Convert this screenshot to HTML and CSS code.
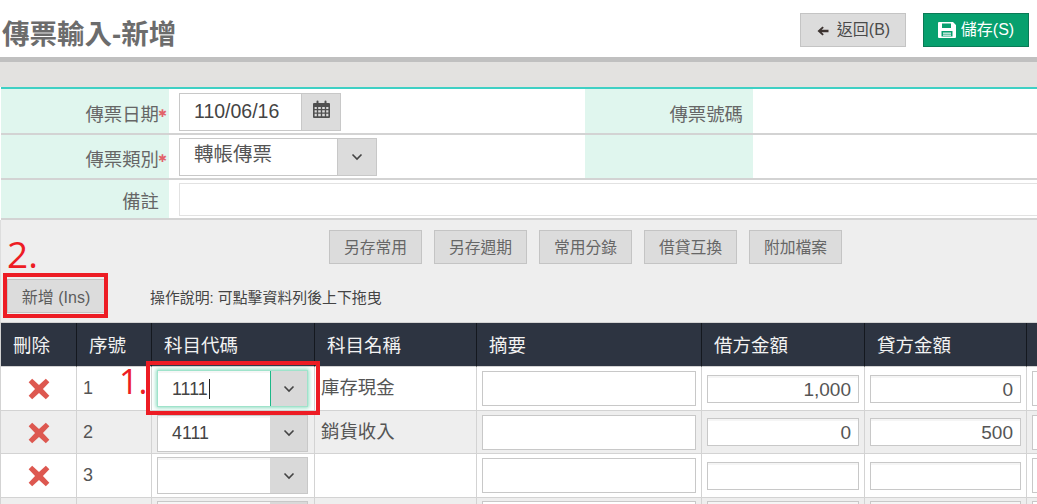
FILE: index.html
```html
<!DOCTYPE html>
<html lang="zh-Hant">
<head>
<meta charset="utf-8">
<title>傳票輸入-新增</title>
<link rel="stylesheet" href="styles.css">
</head>
<body>
<div class="page">
  <header class="page-head">
    <h1 class="page-title">傳票輸入-新增</h1>
    <div class="head-actions">
      <button class="btn btn-back" type="button">
        <svg class="icon-back" viewBox="0 0 12 10"><path d="M5.5 0.5 L0.5 5 L5.5 9.5 L6.8 8.2 L4.6 6.2 H11.5 V3.8 H4.6 L6.8 1.8 Z"/></svg>
        返回(B)
      </button>
      <button class="btn btn-save" type="button">
        <svg class="icon-save" viewBox="0 0 18 16"><path fill-rule="evenodd" d="M0 1 Q0 0 1 0 H15 L18 3 V15 Q18 16 17 16 H1 Q0 16 0 15 Z M4 1.5 V6 H13 V1.5 Z M3.5 9 V14.5 H14.5 V9 Z"/><rect x="5" y="10.6" width="8" height="1.1"/><rect x="5" y="12.6" width="8" height="1.1"/></svg>
        儲存(S)
      </button>
    </div>
  </header>
  <div class="band"></div>

  <section class="form">
    <div class="form-row row-one">
      <div class="label">傳票日期<span class="req">✱</span></div>
      <div class="value">
        <div class="date-field">
          <span class="date-text">110/06/16</span>
          <span class="addon">
            <svg class="icon-cal" viewBox="0 0 17 18"><path fill-rule="evenodd" d="M1 3 H3.5 V1.5 Q3.5 0.5 4.5 0.5 Q5.5 0.5 5.5 1.5 V3 H11.5 V1.5 Q11.5 0.5 12.5 0.5 Q13.5 0.5 13.5 1.5 V3 H16 Q17 3 17 4 V17 Q17 18 16 18 H1 Q0 18 0 17 V4 Q0 3 1 3 Z M1.6 7 V9 H3.8 V7 Z M5.2 7 V9 H7.8 V7 Z M9.2 7 V9 H11.8 V7 Z M13.2 7 V9 H15.4 V7 Z M1.6 10.3 V12.4 H3.8 V10.3 Z M5.2 10.3 V12.4 H7.8 V10.3 Z M9.2 10.3 V12.4 H11.8 V10.3 Z M13.2 10.3 V12.4 H15.4 V10.3 Z M1.6 13.7 V16.3 H3.8 V13.7 Z M5.2 13.7 V16.3 H7.8 V13.7 Z M9.2 13.7 V16.3 H11.8 V13.7 Z M13.2 13.7 V16.3 H15.4 V13.7 Z"/></svg>
          </span>
        </div>
      </div>
      <div class="label">傳票號碼</div>
      <div class="value"></div>
    </div>
    <div class="form-row row-two">
      <div class="label">傳票類別<span class="req">✱</span></div>
      <div class="value">
        <div class="type-select">
          <span class="type-text">轉帳傳票</span>
          <span class="addon addon-select">
            <svg class="chev" viewBox="0 0 12 8"><path d="M1.5 1.5 L6 6 L10.5 1.5"/></svg>
          </span>
        </div>
      </div>
      <div class="label"></div>
      <div class="value"></div>
    </div>
    <div class="form-row row-three">
      <div class="label">備註</div>
      <div class="value value-wide"><div class="note-input"></div></div>
    </div>
  </section>

  <section class="toolbar">
    <div class="tool-row">
      <button class="btn btn-tool" type="button">另存常用</button>
      <button class="btn btn-tool" type="button">另存週期</button>
      <button class="btn btn-tool" type="button">常用分錄</button>
      <button class="btn btn-tool" type="button">借貸互換</button>
      <button class="btn btn-tool" type="button">附加檔案</button>
    </div>
    <div class="add-row">
      <button class="btn btn-add" type="button">新增 (Ins)</button>
      <span class="hint">操作說明: 可點擊資料列後上下拖曳</span>
    </div>
  </section>

  <div class="table-wrap">
    <table class="grid">
      <colgroup>
        <col class="c-del"><col class="c-seq"><col class="c-code"><col class="c-name"><col class="c-memo"><col class="c-amt"><col class="c-amt2"><col class="c-more">
      </colgroup>
      <thead>
        <tr><th>刪除</th><th>序號</th><th>科目代碼</th><th>科目名稱</th><th>摘要</th><th>借方金額</th><th>貸方金額</th><th></th></tr>
      </thead>
      <tbody>
        <tr class="r1">
          <td class="del"><svg class="x" viewBox="0 0 20 20"><path d="M3.8 0.6 L10 6.4 L16.2 0.6 L19.4 3.8 L13.6 10 L19.4 16.2 L16.2 19.4 L10 13.6 L3.8 19.4 L0.6 16.2 L6.4 10 L0.6 3.8 Z"/></svg></td>
          <td class="seq">1</td>
          <td class="code"><div class="combo combo-focus"><span class="combo-text">1111<i class="caret"></i></span><span class="combo-btn"><svg class="chev" viewBox="0 0 12 8"><path d="M1.5 1.5 L6 6 L10.5 1.5"/></svg></span></div></td>
          <td class="name">庫存現金</td>
          <td class="memo"><div class="box"></div></td>
          <td class="amt"><div class="box-amt">1,000</div></td>
          <td class="amt"><div class="box-amt">0</div></td>
          <td class="more"><div class="box"></div></td>
        </tr>
        <tr class="r2 alt">
          <td class="del"><svg class="x" viewBox="0 0 20 20"><path d="M3.8 0.6 L10 6.4 L16.2 0.6 L19.4 3.8 L13.6 10 L19.4 16.2 L16.2 19.4 L10 13.6 L3.8 19.4 L0.6 16.2 L6.4 10 L0.6 3.8 Z"/></svg></td>
          <td class="seq">2</td>
          <td class="code"><div class="combo"><span class="combo-text">4111</span><span class="combo-btn"><svg class="chev" viewBox="0 0 12 8"><path d="M1.5 1.5 L6 6 L10.5 1.5"/></svg></span></div></td>
          <td class="name">銷貨收入</td>
          <td class="memo"><div class="box"></div></td>
          <td class="amt"><div class="box-amt">0</div></td>
          <td class="amt"><div class="box-amt">500</div></td>
          <td class="more"><div class="box"></div></td>
        </tr>
        <tr class="r3">
          <td class="del"><svg class="x" viewBox="0 0 20 20"><path d="M3.8 0.6 L10 6.4 L16.2 0.6 L19.4 3.8 L13.6 10 L19.4 16.2 L16.2 19.4 L10 13.6 L3.8 19.4 L0.6 16.2 L6.4 10 L0.6 3.8 Z"/></svg></td>
          <td class="seq">3</td>
          <td class="code"><div class="combo"><span class="combo-text"></span><span class="combo-btn"><svg class="chev" viewBox="0 0 12 8"><path d="M1.5 1.5 L6 6 L10.5 1.5"/></svg></span></div></td>
          <td class="name"></td>
          <td class="memo"><div class="box"></div></td>
          <td class="amt"><div class="box-amt"></div></td>
          <td class="amt"><div class="box-amt"></div></td>
          <td class="more"><div class="box"></div></td>
        </tr>
        <tr class="r4 alt">
          <td class="del"></td>
          <td class="seq"></td>
          <td class="code"><div class="combo"><span class="combo-text"></span><span class="combo-btn"></span></div></td>
          <td class="name"></td>
          <td class="memo"><div class="box"></div></td>
          <td class="amt"><div class="box-amt"></div></td>
          <td class="amt"><div class="box-amt"></div></td>
          <td class="more"><div class="box"></div></td>
        </tr>
      </tbody>
    </table>
  </div>

  <div class="mark mark-box-add"></div>
  <div class="mark mark-box-code"></div>
  <div class="mark-num mark-num-2">2.</div>
  <div class="mark-num mark-num-1">1.</div>
</div>
</body>
</html>
```

FILE: styles.css
```css
* { box-sizing: border-box; }
html, body { margin: 0; padding: 0; background: #fff; }
body {
  font-family: "Liberation Sans", "Noto Sans CJK TC", sans-serif;
  color: #555;
  overflow: hidden;
}
.page { position: relative; width: 1037px; height: 504px; overflow: hidden; }

.page-head {
  height: 57px;
  display: flex;
  justify-content: space-between;
  align-items: flex-start;
  padding-right: 8px;
}
.page-title {
  margin: 18px 0 0 2px;
  font-size: 27.5px;
  line-height: 34px;
  font-weight: 700;
  color: #6c6c6c;
}
.head-actions { display: flex; gap: 17px; padding-top: 13px; }

.btn {
  font-family: inherit;
  border: 1px solid #c4c4c4;
  background: #dcdcdc;
  color: #555;
  font-size: 15px;
  height: 34px;
  padding: 0;
  display: flex;
  align-items: center;
  justify-content: center;
}
.btn-back { width: 106px; gap: 8px; color: #4a4a4a; font-size: 16px; padding: 0 0 5px 1px; }
.btn-save { width: 106px; gap: 5px; background: #07a06e; border-color: #0a7a56; color: #fff; font-size: 16px; padding-bottom: 5px; }
.icon-back { width: 12px; height: 10px; fill: #3c3330; margin-top: 7px; }
.icon-save { width: 18px; height: 16px; fill: #fff; margin-top: 5px; }

.band {
  height: 30px;
  background: #e3e2e0;
  border-top: 5px solid #c0c0c0;
}

.form { border-top: 2px solid #3fd0c4; margin-left: 1px; }
.form-row {
  display: grid;
  grid-template-columns: 168px 416px 168px 1fr;
  grid-template-rows: minmax(0, 1fr);
  border-bottom: 2px solid #d3d3d3;
}
.row-one { height: 46px; }
.row-two { height: 45px; }
.row-three { height: 40px; }
.label {
  background: #e0f6ee;
  display: flex;
  align-items: center;
  justify-content: flex-end;
  padding: 4px 10px 0 0;
  font-size: 18.4px;
  color: #666;
  position: relative;
}
.row-two .label { padding-top: 3px; }
.row-three .label { padding-top: 2px; }
.req {
  position: absolute;
  right: 2px;
  top: 12px;
  font-family: "DejaVu Sans", sans-serif;
  font-size: 10.5px;
  font-weight: 700;
  line-height: 24px;
  color: #e2626a;
}
.row-two .req { top: 11px; }
.value { padding-left: 10px; }
.value-wide { grid-column: 2 / 5; }

.date-field {
  margin-top: 4px;
  width: 162px;
  height: 38px;
  display: flex;
  border: 1px solid #c8c8c8;
}
.date-text {
  flex: 1;
  padding-left: 14px;
  font-size: 19.5px;
  line-height: 35px;
  color: #444;
}
.addon {
  width: 39px;
  background: #dcdcdc;
  border-left: 1px solid #c8c8c8;
  display: flex;
  align-items: flex-start;
  justify-content: center;
}
.icon-cal { width: 17px; height: 18px; fill: #505050; margin-top: 6px; }

.type-select {
  margin-top: 3px;
  width: 198px;
  height: 38px;
  display: flex;
  border: 1px solid #c8c8c8;
}
.type-text {
  flex: 1;
  padding-left: 14px;
  font-size: 19.5px;
  line-height: 30px;
  color: #555;
}
.addon-select { align-items: center; }
.chev { width: 12px; height: 8px; fill: none; stroke: #444; stroke-width: 1.6; }

.note-input {
  margin-top: 3px;
  height: 33px;
  border: 1px solid #e2e2e2;
  border-right: 0;
}

.toolbar { background: #eee; height: 102px; border-left: 1px solid #ddd; }
.tool-row { display: flex; gap: 12px; padding: 10px 0 0 328px; }
.btn-tool { width: 93px; font-size: 15.8px; color: #666; padding-bottom: 2px; }
.add-row { display: flex; align-items: center; gap: 45px; margin-top: 15px; padding-left: 6px; }
.btn-add { width: 98px; font-size: 16px; color: #5c5c5c; }
.hint { font-size: 14.9px; color: #444; }

.table-wrap { border-top: 1px solid #d3d3d3; overflow: hidden; }
.grid {
  table-layout: fixed;
  border-collapse: separate;
  border-spacing: 0;
  width: 1127px;
}
.c-del { width: 77px; }
.c-seq { width: 75px; }
.c-code { width: 163px; }
.c-name { width: 162px; }
.c-memo { width: 225px; }
.c-amt { width: 163px; }
.c-amt2 { width: 162px; }
.c-more { width: 100px; }

.grid th {
  height: 44px;
  background: #2d3441;
  color: #f2f2f2;
  font-weight: 400;
  font-size: 18.5px;
  text-align: left;
  padding: 0 0 2px 12px;
  border-right: 1px solid #14181f;
  border-bottom: 1px solid #d3d3d3;
}
.grid th:first-child { border-left: 1px solid #d3d3d3; }
.grid td {
  border-right: 1px solid #d3d3d3;
  border-bottom: 1px solid #d3d3d3;
  padding: 0 5px;
  font-size: 18px;
  color: #555;
  background: #fff;
}
.grid td:first-child { border-left: 1px solid #d3d3d3; }
.grid .alt td { background: #eee; }
.r1 td { height: 44px; }
.r2 td { height: 43px; }
.r3 td { height: 44px; }
.r4 td { height: 44px; vertical-align: top; padding-top: 3px; }

.grid .del { text-align: center; line-height: 0; padding: 0; }
.x { width: 22px; height: 22px; fill: #dd5850; margin-top: 1px; }
.grid .seq { padding-left: 6px; font-size: 18px; }
.grid .name { padding: 0 0 5px 6px; font-size: 18.4px; }

.combo {
  height: 37px;
  width: 151px;
  display: flex;
  border: 1px solid #c8c8c8;
  background: #fff;
}
.r2 .combo { margin-top: 2px; }
.combo-text {
  flex: 1;
  padding-left: 14px;
  font-size: 17.8px;
  line-height: 34px;
  color: #444;
  box-shadow: inset 0 2px 0 #f6f6f6;
  display: flex;
  align-items: center;
}
.combo-btn {
  width: 37px;
  background: #d9d9d9;
  display: flex;
  align-items: center;
  justify-content: center;
}
.combo-focus {
  border-color: #9fe3cb;
  box-shadow: 0 0 4px 1px #8fdcc1;
}
.combo-focus .combo-btn { border-left: 1px solid #1db888; }
.caret { display: inline-block; width: 1px; height: 20px; background: #222; margin-left: 1px; }

.box {
  height: 35px;
  border: 1px solid #c8c8c8;
  background: #fff;
}
.box-amt {
  height: 28px;
  border: 1px solid #c8c8c8;
  background: #fff;
  box-shadow: inset 0 2px 0 #f5f5f5;
  text-align: right;
  padding-right: 7px;
  font-size: 19px;
  line-height: 27px;
  color: #555;
}

.mark { position: absolute; border: 4px solid #ed1c24; }
.mark-box-add { left: 3px; top: 273px; width: 105px; height: 45px; }
.mark-box-code { left: 146px; top: 361px; width: 174px; height: 54px; }
.mark-num {
  position: absolute;
  font-family: "Open Sans", "Noto Sans", sans-serif;
  line-height: 36px;
  color: #ed1c24;
}
.mark-num-2 { left: 7px; top: 236px; font-size: 37px; }
.mark-num-1 { left: 119px; top: 363px; font-size: 34px; }
```
